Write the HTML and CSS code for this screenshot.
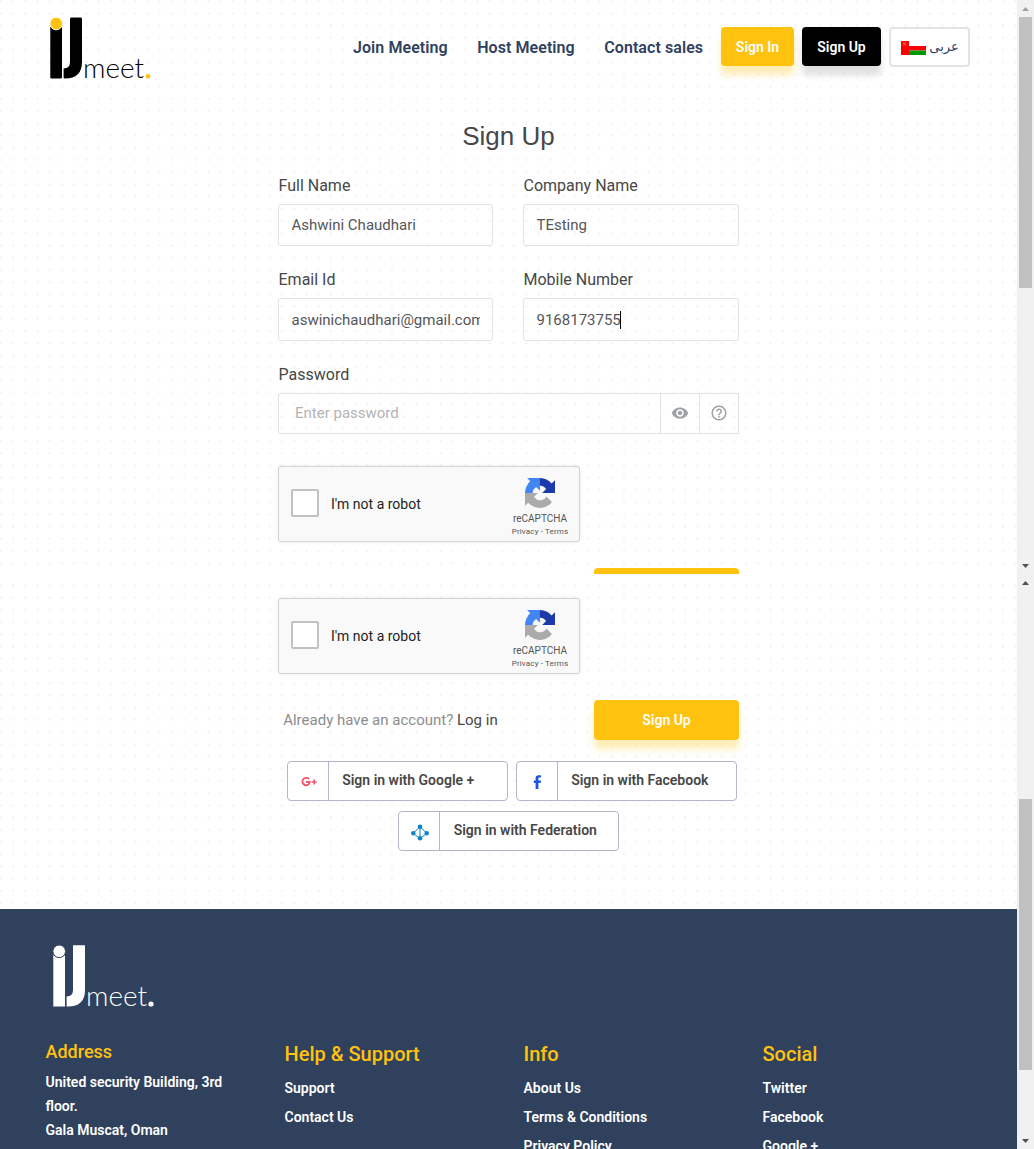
FILE: index.html
```html
<!DOCTYPE html>
<html lang="en">
<head>
<meta charset="utf-8">
<title>IJmeet - Sign Up</title>
<link rel="stylesheet" href="styles.css">
</head>
<body>
<svg class="defs" width="0" height="0" aria-hidden="true">
  <symbol id="recaptcha" viewBox="0 0 64 64">
    <path fill="#1c3aa9" d="M64 31.955l-.033-1.37V4.687l-7.16 7.16C50.948 4.674 42.033.093 32.05.093c-10.4 0-19.622 4.96-25.458 12.64l11.736 11.86a15.55 15.55 0 0 1 4.754-5.334c2.05-1.6 4.952-2.906 8.968-2.906.485 0 .86.057 1.135.163 4.976.393 9.288 3.14 11.828 7.124l-8.307 8.307L64 31.953"/>
    <path fill="#4285f4" d="M31.862.094l-1.37.033H4.594l7.16 7.16C4.58 13.147 0 22.06 0 32.046c0 10.4 4.96 19.622 12.64 25.458L24.5 45.768a15.55 15.55 0 0 1-5.334-4.754c-1.6-2.05-2.906-4.952-2.906-8.968 0-.485.057-.86.163-1.135.393-4.976 3.14-9.288 7.124-11.828l8.307 8.307L31.86.095"/>
    <path fill="#ababab" d="M.001 32.045l.033 1.37v25.898l7.16-7.16c5.86 7.173 14.774 11.754 24.76 11.754 10.4 0 19.622-4.96 25.458-12.64l-11.736-11.86a15.55 15.55 0 0 1-4.754 5.334c-2.05 1.6-4.952 2.906-8.968 2.906-.485 0-.86-.057-1.135-.163-4.976-.393-9.288-3.14-11.828-7.124l8.307-8.307c-10.522.04-22.4.066-27.295-.005"/>
  </symbol>
</svg>

<section class="pane pane-top">
  <div class="view">
    <header class="header">
      <svg class="logo" width="104" height="72" viewBox="0 0 104 72">
        <path d="M1.3 9.5Q7 14.5 13 9.5V60.5Q13 61.500 11.500 61.500H2.500Q1.300 61.500 1.300 60.500Z"/>
        <path d="M21 2Q21 .6 22.500 .6H31.500Q33 .6 33 2V45Q33 61.500 16 61.500H15.500Q14.600 61.500 14.600 60.500V51.500Q21 51.500 21 45Z"/>
        <circle cx="7.200" cy="6.500" r="6.300" fill="#ffc20e" stroke="#fff" stroke-width="1"/>
        <text x="34" y="61" textLength="61" lengthAdjust="spacingAndGlyphs">meet</text>
        <circle cx="99" cy="59.300" r="2.400" fill="#ffc20e"/>
      </svg>
      <nav class="nav">
        <a>Join Meeting</a><a>Host Meeting</a><a>Contact sales</a>
      </nav>
      <div class="actions">
        <a class="btn yellow">Sign In</a>
        <a class="btn black">Sign Up</a>
        <a class="btn lang">
          <svg width="25" height="14" viewBox="0 0 25 14"><path fill="#fff" d="M0 0H25V5H0Z"/><path fill="#f00" d="M0 0H8V5H25V9.500H8V14H0Z"/><path fill="#009a00" d="M8 9.500H25V14H8Z"/><path stroke="#ff7c7c" d="M2 1.500L5 4.500M5 1.500L2 4.500"/></svg>
          <span lang="ar" dir="rtl">عربى</span>
        </a>
      </div>
    </header>
    <main class="form">
      <h1>Sign Up</h1>
      <div class="grid">
        <div class="group"><label>Full Name</label><div class="field"><span>Ashwini Chaudhari</span></div></div>
        <div class="group"><label>Company Name</label><div class="field"><span>TEsting</span></div></div>
        <div class="group"><label>Email Id</label><div class="field tall"><span>aswinichaudhari@gmail.com</span></div></div>
        <div class="group"><label>Mobile Number</label><div class="field tall"><span>9168173755</span><i class="caret"></i></div></div>
      </div>
      <label>Password</label>
      <div class="password">
        <span class="placeholder">Enter password</span>
        <span class="addon"><svg width="18" height="18" viewBox="0 0 24 24"><path d="M12 4.500C7 4.500 2.730 7.610 1 12c1.730 4.390 6 7.500 11 7.500s9.270-3.110 11-7.500c-1.730-4.390-6-7.500-11-7.500zM12 17c-2.760 0-5-2.240-5-5s2.240-5 5-5 5 2.240 5 5-2.240 5-5 5zm0-8c-1.660 0-3 1.340-3 3s1.340 3 3 3 3-1.340 3-3-1.340-3-3-3z"/></svg></span>
        <span class="addon"><svg width="18" height="18" viewBox="0 0 24 24"><path d="M11 18h2v-2h-2v2zm1-16C6.480 2 2 6.480 2 12s4.480 10 10 10 10-4.480 10-10S17.520 2 12 2zm0 18c-4.410 0-8-3.590-8-8s3.590-8 8-8 8 3.590 8 8-3.590 8-8 8zm0-14c-2.210 0-4 1.790-4 4h2c0-1.100.9-2 2-2s2 .9 2 2c0 2-3 1.750-3 5h2c0-2.250 3-2.500 3-5 0-2.210-1.790-4-4-4z"/></svg></span>
      </div>
      <div class="captcha">
        <span class="check"></span><span class="robot">I'm not a robot</span>
        <div class="brand"><svg width="30" height="30"><use href="#recaptcha"/></svg><b>reCAPTCHA</b><small>Privacy - Terms</small></div>
      </div>
      <div class="submit-row"><span></span><button class="submit"></button></div>
    </main>
  </div>
  <div class="scroll">
    <i class="arrow up dim"></i><i class="thumb"></i><i class="arrow down"></i>
  </div>
</section>

<section class="pane pane-bottom">
  <div class="view">
    <main class="form">
      <div class="captcha">
        <span class="check"></span><span class="robot">I'm not a robot</span>
        <div class="brand"><svg width="30" height="30"><use href="#recaptcha"/></svg><b>reCAPTCHA</b><small>Privacy - Terms</small></div>
      </div>
      <div class="submit-row">
        <span class="login">Already have an account? <a>Log in</a></span>
        <button class="submit">Sign Up</button>
      </div>
      <div class="social">
        <a class="sbtn"><span class="sicon"><svg width="16" height="10" viewBox="0 0 16 10"><path fill="none" stroke="#f9556d" stroke-width="1.900" d="M7.900 2.100A3.700 3.700 0 1 0 8.800 5H5"/><path fill="none" stroke="#f9556d" stroke-width="1.700" d="M10.700 5h5M13.200 2.500v5"/></svg></span><span>Sign in with Google +</span></a>
        <a class="sbtn"><span class="sicon"><svg width="9" height="14" viewBox="0 0 9 14"><path fill="#1f53e5" d="M2.600 14V7.900H.8V5.400h1.800V3.600C2.600 1.500 3.700.3 5.700.3h2.300v2.300H6.500c-.8 0-1.100.4-1.100 1.100v1.700H8L7.600 7.900H5.400V14z"/></svg></span><span>Sign in with Facebook</span></a>
        <a class="sbtn federation"><span class="sicon"><svg width="18" height="17" viewBox="0 0 18 17"><path fill="none" stroke="#0a82cc" stroke-width="1" d="M9 2.500L2.200 9.500L9 14.500L15.800 9.500ZM9 2v12"/><g fill="#0a82cc"><circle cx="9" cy="2.800" r="2.300"/><circle cx="2.300" cy="9.200" r="2.200"/><circle cx="15.700" cy="9.200" r="2.200"/><circle cx="9" cy="14.200" r="2.300"/></g></svg></span><span>Sign in with Federation</span></a>
      </div>
    </main>
    <footer class="footer">
      <svg class="logo light" width="104" height="72" viewBox="0 0 104 72">
        <path d="M1.300 10Q7 15 13 10V61.500H1.300Z"/>
        <path d="M21 .3H33V45Q33 61.500 16 61.500H14.600V51.500Q21 51.500 21 45Z"/>
        <circle cx="7.200" cy="6.300" r="6.300" stroke="#30415d" stroke-width="1"/>
        <text x="34" y="61" textLength="61" lengthAdjust="spacingAndGlyphs">meet</text>
        <circle cx="99" cy="59" r="2.600"/>
      </svg>
      <div class="columns">
        <div class="col address"><h2>Address</h2><p>United security Building, 3rd floor.<br>Gala Muscat, Oman</p></div>
        <div class="col"><h2>Help &amp; Support</h2><a>Support</a><a>Contact Us</a></div>
        <div class="col"><h2>Info</h2><a>About Us</a><a>Terms &amp; Conditions</a><a>Privacy Policy</a></div>
        <div class="col"><h2>Social</h2><a>Twitter</a><a>Facebook</a><a>Google +</a></div>
      </div>
    </footer>
  </div>
  <div class="scroll">
    <i class="arrow up"></i><i class="thumb"></i><i class="arrow down"></i>
  </div>
</section>
</body>
</html>
```
FILE: styles.css
```css
* { box-sizing: border-box; }
body { margin: 0; width: 1034px; height: 1149px; overflow: hidden; font-family: Roboto, "Liberation Sans", sans-serif; color: #474747; background: #fff; }
.defs { position: absolute; }
svg { display: block; flex: none; }

.pane { display: flex; overflow: hidden; }
.pane-top { height: 574px; }
.pane-bottom { height: 575px; }
.view {
  width: 1017px;
  overflow: hidden;
  background-color: #fff;
  background-image: radial-gradient(circle at 50% 50%, #efefef 0, #f2f2f2 0.7px, rgba(255, 255, 255, 0) 1.4px);
  background-size: 12.23px 12.23px;
  background-position: -5.2px -5px;
}
.pane-bottom .view { background-position: -5.2px 5.3px; }

.scroll { display: flex; flex-direction: column; align-items: center; width: 17px; background: #f1f1f1; }
.arrow { width: 7px; height: 4px; background: #505050; flex: none; }
.arrow.up { margin: 7px 0 6px; clip-path: polygon(50% 0, 100% 100%, 0 100%); }
.arrow.down { margin: auto 0 6px; clip-path: polygon(0 0, 100% 0, 50% 100%); }
.arrow.dim { background: #a3a3a3; }
.thumb { width: 13px; height: 271px; background: #c1c1c1; flex: none; }
.pane-bottom .thumb { margin-top: 208px; }

.header { display: flex; height: 95px; padding-left: 49px; }
.logo { margin-top: 17px; }
.logo text { font: 300 27px Lato, sans-serif; }
.light { fill: #fff; }
.nav { display: flex; gap: 29.5px; width: 368px; margin-left: 200px; padding-top: 37px; font-size: 16px; line-height: 22px; font-weight: 600; letter-spacing: 0.07px; color: #30415d; white-space: nowrap; }
.actions { display: flex; gap: 8px; padding-top: 27px; }
.btn { display: flex; align-items: center; justify-content: center; height: 39px; border-radius: 4px; font-size: 14px; font-weight: 600; color: #fff; }
.yellow { width: 73px; background: #ffc20e; box-shadow: 0 9px 7px rgba(255, 194, 14, 0.3); }
.black { width: 79px; background: #000; box-shadow: 0 9px 7px rgba(0, 0, 0, 0.13); }
.lang { width: 81px; height: 40px; gap: 3px; padding: 2px 0 0 1px; border: 2px solid #e3e3e3; background: #fff; color: #30415d; }
.lang span { font: 13px "DejaVu Sans", sans-serif; margin-top: -4px; }

.form { width: 461px; margin-left: 278px; }
h1 { margin: 25px 0 23px; font-size: 26px; line-height: 32px; font-weight: 400; font-family: "Liberation Sans", sans-serif; text-align: center; }
label { display: block; font-size: 16px; line-height: 22px; margin-bottom: 7px; padding-left: 0.5px; }
.grid { display: grid; grid-template-columns: 215px 216px; column-gap: 30px; }
.group { height: 94px; }
.group:nth-child(n+3) { height: 95px; }
.field { display: flex; align-items: center; height: 42px; padding: 0 12px 0 12.5px; border: 1px solid #e2e2e2; border-radius: 3px; font-size: 15px; line-height: 20px; color: #55565a; }
.field.tall { height: 43px; }
.field span { overflow: hidden; white-space: nowrap; }
.caret { width: 1px; height: 18px; margin-left: -0.5px; background: #000; }
.password { display: flex; height: 41px; border: 1px solid #e2e2e2; border-radius: 2px 0 0 2px; }
.placeholder { flex: 1; padding-left: 16px; font-size: 15px; line-height: 38px; color: #b4b4b4; }
.addon { display: flex; align-items: center; justify-content: center; width: 39px; padding-bottom: 1px; border-left: 1px solid #e2e2e2; }
.addon svg { fill: #9da2a6; }

.captcha { display: flex; align-items: center; width: 302px; height: 76px; margin-top: 32px; padding: 0 10px 0 12px; border: 1px solid #d3d3d3; border-radius: 3px; background: #f9f9f9; box-shadow: 0 0 4px rgba(0, 0, 0, 0.08); }
.pane-bottom .captcha { margin-top: 24px; }
.check { width: 28px; height: 28px; border: 2px solid #c1c1c1; border-radius: 2px; background: #fff; margin-bottom: 2px; }
.robot { margin-left: 12px; font-size: 14px; color: #222; }
.brand { display: flex; flex-direction: column; align-items: center; width: 58px; height: 74px; margin-left: auto; padding-top: 11px; color: #555; white-space: nowrap; }
.brand b { font-size: 10px; line-height: 10px; font-weight: 400; margin-top: 6px; }
.brand small { font-size: 8px; line-height: 10px; margin-top: 3px; letter-spacing: 0.15px; }
.submit-row { display: flex; justify-content: space-between; margin-top: 26px; }
.submit { width: 145px; height: 40px; padding: 0; border: 0; border-radius: 4px; background: #ffc20e; box-shadow: 0 9px 7px rgba(255, 194, 14, 0.3); color: #fff; font: 600 14px Roboto, sans-serif; }
.login { padding-left: 5.2px; font-size: 15px; line-height: 40px; color: #8d8d8d; }
.login a { color: #474747; }
.social { display: flex; flex-wrap: wrap; justify-content: center; gap: 10px 8px; margin: 21px -6px 0 0; width: 467px; padding: 0 1px; }
.sbtn { display: flex; width: 221px; height: 40px; border: 1px solid #b6b3cc; border-radius: 4px; background: #fff; font-size: 14px; font-weight: 600; line-height: 36px; color: #474747; }
.federation { margin-right: 6px; }
.sbtn > span:last-child { padding-left: 13.7px; }
.sicon { display: flex; align-items: center; justify-content: center; width: 41px; padding: 2px 0 0 2px; border-right: 1px solid #b6b3cc; }

.footer { height: 300px; margin-top: 58px; padding: 36px 45.500px; background: #30415d; color: #fff; }
.footer .logo { margin: 0 0 0 6px; }
.columns { display: grid; grid-template-columns: repeat(4, 239px); margin-top: 24px; }
.col h2 { margin: 0 0 9px; font-size: 20px; line-height: 26px; font-weight: 500; color: #ffc20e; }
.col a, .col p { display: block; margin: 0; font-size: 14px; font-weight: 600; line-height: 24px; }
.col a { margin-bottom: 5px; }
.address h2 { font-size: 18px; line-height: 22px; margin-bottom: 7px; }
.address p { width: 190px; }
```
